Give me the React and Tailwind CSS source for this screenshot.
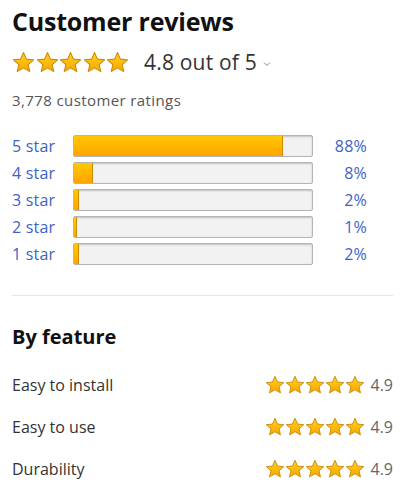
import React from 'react';

const breakdown = [
  { label: '5 star', pct: 88 },
  { label: '4 star', pct: 8 },
  { label: '3 star', pct: 2 },
  { label: '2 star', pct: 1 },
  { label: '1 star', pct: 2 },
];

const features = [
  { name: 'Easy to install', score: '4.9' },
  { name: 'Easy to use', score: '4.9' },
  { name: 'Durability', score: '4.9' },
];

// single filled star, amazon style gradient with darker rim
function Star({ size = 22, id }) {
  return (
    <svg width={size} height={size} viewBox="0 0 24 24" className="shrink-0">
      <defs>
        <linearGradient id={id} x1="0" y1="0" x2="0" y2="1">
          <stop offset="0%" stopColor="#ffd21f" />
          <stop offset="100%" stopColor="#f7a600" />
        </linearGradient>
      </defs>
      <path
        d="M12 1.6l3.05 6.9 7.45.7-5.65 4.95 1.7 7.35L12 17.6l-6.55 3.9 1.7-7.35L1.5 9.2l7.45-.7z"
        fill={`url(#${id})`}
        stroke="#c98a08"
        strokeWidth="1.1"
        strokeLinejoin="round"
      />
    </svg>
  );
}

function StarRow({ size, gap, prefix }) {
  return (
    <div className={`flex ${gap}`}>
      {[0, 1, 2, 3, 4].map((i) => (
        <Star key={i} size={size} id={`${prefix}-${i}`} />
      ))}
    </div>
  );
}

export default function App() {
  return (
    <div className="w-[418px] h-[500px] bg-white px-3 font-['Open_Sans','Noto_Sans',sans-serif] text-[#111]">
      <h2 className="pt-[5px] text-[25px] leading-[32px] font-bold tracking-[-0.2px]">Customer reviews</h2>

      {/* overall rating */}
      <div className="mt-[13px] flex items-center h-[24px]">
        <StarRow size={23} gap="gap-[0.5px]" prefix="top" />
        <span className="ml-[15px] text-[21px] leading-[24px] text-[#333] tracking-[0.2px]">4.8 out of 5</span>
        <svg width="8" height="6" viewBox="0 0 8 6" className="ml-[6px] mt-[4px]">
          <path d="M1 1.5l3 3 3-3" fill="none" stroke="#888" strokeWidth="1" />
        </svg>
      </div>

      <p className="mt-[16px] text-[15px] leading-[20px] text-[#555] tracking-[0.4px]">3,778 customer ratings</p>

      {/* histogram */}
      <div className="mt-[25px] flex flex-col gap-[5px]">
        {breakdown.map((row) => (
          <div key={row.label} className="flex items-center h-[22px]">
            <span className="w-[61px] text-[16px] leading-[20px] text-[#3d63c6] tracking-[0.2px]">{row.label}</span>
            <div className="relative w-[240px] h-[22px] rounded-[2px] border border-[#b4b4b4] bg-[#f2f2f2] shadow-[inset_0_1px_2px_rgba(0,0,0,0.2)] overflow-hidden">
              <div
                className="h-full bg-gradient-to-b from-[#ffc800] to-[#ffa400] border-r border-[#d08c00]"
                style={{ width: `${row.pct}%`, minWidth: row.pct > 0 ? '3px' : 0 }}
              />
            </div>
            <span className="w-[54px] text-right text-[16px] leading-[20px] text-[#3d63c6] tracking-[0.2px]">{row.pct}%</span>
          </div>
        ))}
      </div>

      <div className="mt-[30px] w-[381px] border-t border-[#e5e5e5]" />

      {/* by feature */}
      <h3 className="mt-[29px] text-[20px] leading-[24px] font-bold">By feature</h3>

      <div className="mt-[25px] w-[381px] flex flex-col gap-[20px]">
        {features.map((f, idx) => (
          <div key={f.name} className="flex items-center justify-between h-[22px]">
            <span className="text-[16px] leading-[20px] text-[#333]">{f.name}</span>
            <div className="flex items-center">
              <StarRow size={20} gap="gap-0" prefix={`f${idx}`} />
              <span className="ml-[6px] text-[16px] leading-[20px] text-[#666]">{f.score}</span>
            </div>
          </div>
        ))}
      </div>
    </div>
  );
}
